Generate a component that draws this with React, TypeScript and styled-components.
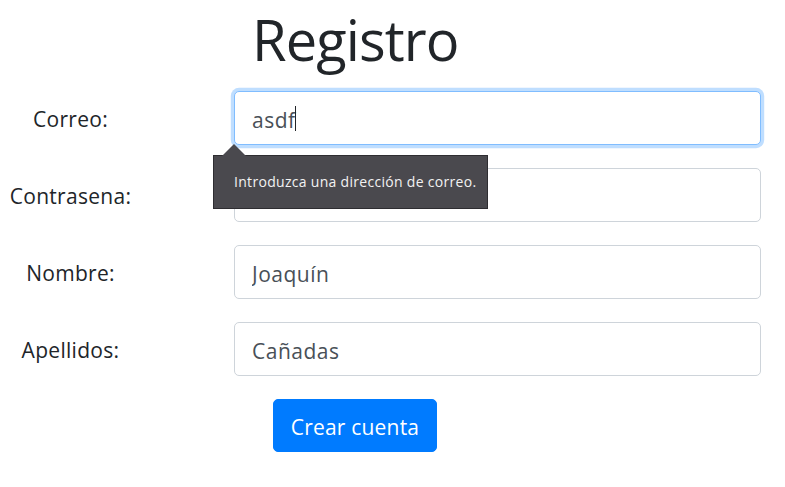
import React from "react";
import styled, { createGlobalStyle } from "styled-components";

const Global = createGlobalStyle`
  html, body { margin: 0; padding: 0; background: #fff; }
  body { font-family: "Open Sans", "Noto Sans", sans-serif; color: #212529; }
  * { box-sizing: border-box; }
`;

const Page = styled.div`
  width: 785px;
  height: 487px;
  overflow: hidden;
  display: flex;
  flex-direction: column;
`;

const Title = styled.h1`
  margin: 0 0 0 252px;
  padding-top: 0;
  font-size: 56px;
  font-weight: 400;
  line-height: 78px;
  letter-spacing: -0.9px;
  color: #212529;
`;

const Form = styled.form`
  display: flex;
  flex-direction: column;
  gap: 23px;
  margin-top: 13px;
  padding-right: 24px;
`;

const Row = styled.div`
  display: grid;
  grid-template-columns: 141px 1fr;
  column-gap: 93px;
  align-items: center;
`;

const Label = styled.label`
  text-align: center;
  font-size: 21px;
  letter-spacing: 0.3px;
  padding-top: 1px;
  color: #212529;
`;

const Field = styled.div`
  position: relative;
`;

const Input = styled.input<{ $focus?: boolean }>`
  display: block;
  width: 100%;
  height: 54px;
  padding: 3px 17px 0;
  font-family: "Open Sans", "Noto Sans", sans-serif;
  font-size: 21px;
  letter-spacing: 0.5px;
  color: #495057;
  background: #fff;
  border: 1px solid ${(p) => (p.$focus ? "#80bdff" : "#ced4da")};
  border-radius: 5px;
  outline: none;
  box-shadow: ${(p) => (p.$focus ? "0 0 0 3.2px rgba(0,123,255,0.25)" : "none")};
`;

const Caret = styled.span`
  position: absolute;
  left: 61px;
  top: 15px;
  width: 1px;
  height: 25px;
  background: #212529;
`;

const Bubble = styled.div`
  position: absolute;
  left: -21px;
  top: 64px;
  width: 275px;
  height: 54px;
  background: #4a494e;
  border: 1px solid #2e2d31;
  color: #f2f2f2;
  font-size: 14px;
  letter-spacing: 0.3px;
  display: flex;
  align-items: center;
  padding-left: 20px;
  padding-bottom: 2px;
  white-space: nowrap;
  z-index: 2;
  &::before {
    content: "";
    position: absolute;
    left: 8px;
    top: -12px;
    width: 0;
    height: 0;
    border-left: 12px solid transparent;
    border-right: 12px solid transparent;
    border-bottom: 12px solid #4a494e;
  }
`;

const ButtonRow = styled.div`
  padding-left: 273px;
`;

const Button = styled.button`
  width: 164px;
  height: 53px;
  background: #007bff;
  border: 1px solid #007bff;
  border-radius: 5px;
  color: #fff;
  font-family: "Open Sans", "Noto Sans", sans-serif;
  font-size: 21px;
  letter-spacing: 0.2px;
  padding: 2px 0 0;
`;

const fields = [
  { label: "Correo:", value: "asdf", focus: true },
  { label: "Contrasena:", value: "" },
  { label: "Nombre:", value: "Joaquín" },
  { label: "Apellidos:", value: "Cañadas" },
];

export default function App() {
  return (
    <Page>
      <Global />
      <Title>Registro</Title>
      <Form onSubmit={(e) => e.preventDefault()}>
        {fields.map((f) => (
          <Row key={f.label}>
            <Label>{f.label}</Label>
            <Field>
              <Input
                $focus={f.focus}
                value={f.value}
                readOnly
                type={f.label === "Contrasena:" ? "password" : "text"}
              />
              {f.focus && (
                <>
                  <Caret />
                  <Bubble>Introduzca una dirección de correo.</Bubble>
                </>
              )}
            </Field>
          </Row>
        ))}
        <ButtonRow>
          <Button type="submit">Crear cuenta</Button>
        </ButtonRow>
      </Form>
    </Page>
  );
}
